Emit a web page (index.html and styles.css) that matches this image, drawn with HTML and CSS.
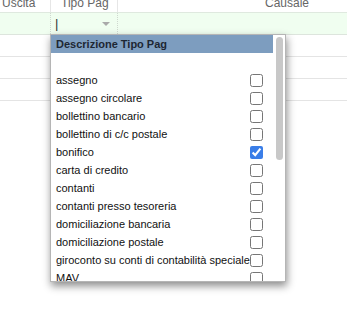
FILE: index.html
```html
<!DOCTYPE html>
<html lang="it">
<head>
    <meta charset="UTF-8">
    <title>Tipo Pag</title>
    <link rel="stylesheet" href="styles.css">
</head>
<body>
    <div class="grid">
        <div class="grid-row head">
            <div class="cell c-uscita">Uscita</div>
            <div class="cell c-tipo">Tipo Pag</div>
            <div class="cell c-causale">Causale</div>
        </div>
        <div class="grid-row filter">
            <div class="cell c-uscita"></div>
            <div class="cell c-tipo">
                <span class="caret">|</span>
                <span class="arrow"></span>
            </div>
            <div class="cell c-causale"></div>
        </div>
        <div class="grid-row data"></div>
        <div class="grid-row data"></div>
        <div class="grid-row data"></div>
    </div>

    <div class="popup">
        <div class="popup-body">
            <div class="popup-head">Descrizione Tipo Pag</div>
            <div class="item blank"></div>
            <label class="item">assegno <input type="checkbox"></label>
            <label class="item">assegno circolare <input type="checkbox"></label>
            <label class="item">bollettino bancario <input type="checkbox"></label>
            <label class="item">bollettino di c/c postale <input type="checkbox"></label>
            <label class="item">bonifico <input type="checkbox" checked></label>
            <label class="item">carta di credito <input type="checkbox"></label>
            <label class="item">contanti <input type="checkbox"></label>
            <label class="item">contanti presso tesoreria <input type="checkbox"></label>
            <label class="item">domiciliazione bancaria <input type="checkbox"></label>
            <label class="item">domiciliazione postale <input type="checkbox"></label>
            <label class="item">giroconto su conti di contabilità speciale <input type="checkbox"></label>
            <label class="item">MAV <input type="checkbox"></label>
        </div>
        <div class="scroll">
            <div class="thumb"></div>
        </div>
    </div>
</body>
</html>
```

FILE: styles.css
```css
body {
    margin: 0;
    font-family: 'Liberation Sans', Arial, sans-serif;
    font-size: 11px;
    color: #222;
    background: #fff;
    position: relative;
    height: 309px;
    overflow: hidden;
}
.grid-row {
    display: flex;
}
.cell {
    box-sizing: border-box;
}
.c-uscita {
    width: 51px;
}
.c-tipo {
    width: 67px;
}
.c-causale {
    flex: 1;
}
.head {
    height: 12px;
    border-bottom: 1px solid #dfe9df;
    color: #666;
    font-size: 12px;
    line-height: 6px;
    overflow: hidden;
}
.head .c-uscita {
    padding-left: 2px;
    border-right: 1px solid #e6e6e6;
}
.head .c-tipo {
    padding-left: 10px;
    border-right: 1px solid #e6e6e6;
}
.head .c-causale {
    padding-left: 147px;
}
.filter {
    height: 21px;
    background: #f0fef0;
    border-bottom: 1px solid #dde5dd;
}
.filter .c-uscita {
    border-right: 1px dotted #cfd8cf;
}
.filter .c-tipo {
    border-right: 1px dotted #cfd8cf;
    display: flex;
    align-items: center;
    justify-content: space-between;
    padding: 0 7px 0 4px;
}
.caret {
    color: #333;
    font-size: 13px;
}
.arrow {
    width: 0;
    height: 0;
    border-left: 4px solid transparent;
    border-right: 4px solid transparent;
    border-top: 4px solid #aaa;
}
.data {
    height: 21px;
    border-bottom: 1px solid #e4e4e4;
}
.popup {
    position: absolute;
    left: 50px;
    top: 34px;
    width: 234px;
    height: 246px;
    border: 1px solid #b5b5b5;
    background: #fff;
    box-shadow: 1px 4px 8px rgba(0, 0, 0, 0.45);
    display: flex;
    overflow: hidden;
}
.popup-body {
    width: 222px;
}
.popup-head {
    height: 18px;
    background: #7d9dbf;
    color: #1d2733;
    font-weight: bold;
    line-height: 18px;
    padding-left: 5px;
}
.item {
    height: 18px;
    display: flex;
    align-items: center;
    justify-content: space-between;
    padding: 0 10px 0 5px;
    color: #111;
    white-space: nowrap;
}
.item input {
    margin: 0;
    width: 13px;
    height: 13px;
    accent-color: #3a7ee8;
}
.scroll {
    flex: 1;
    padding: 2px 2px 0 3px;
}
.thumb {
    height: 123px;
    background: #c8c8c8;
    border-radius: 4px;
}
```
